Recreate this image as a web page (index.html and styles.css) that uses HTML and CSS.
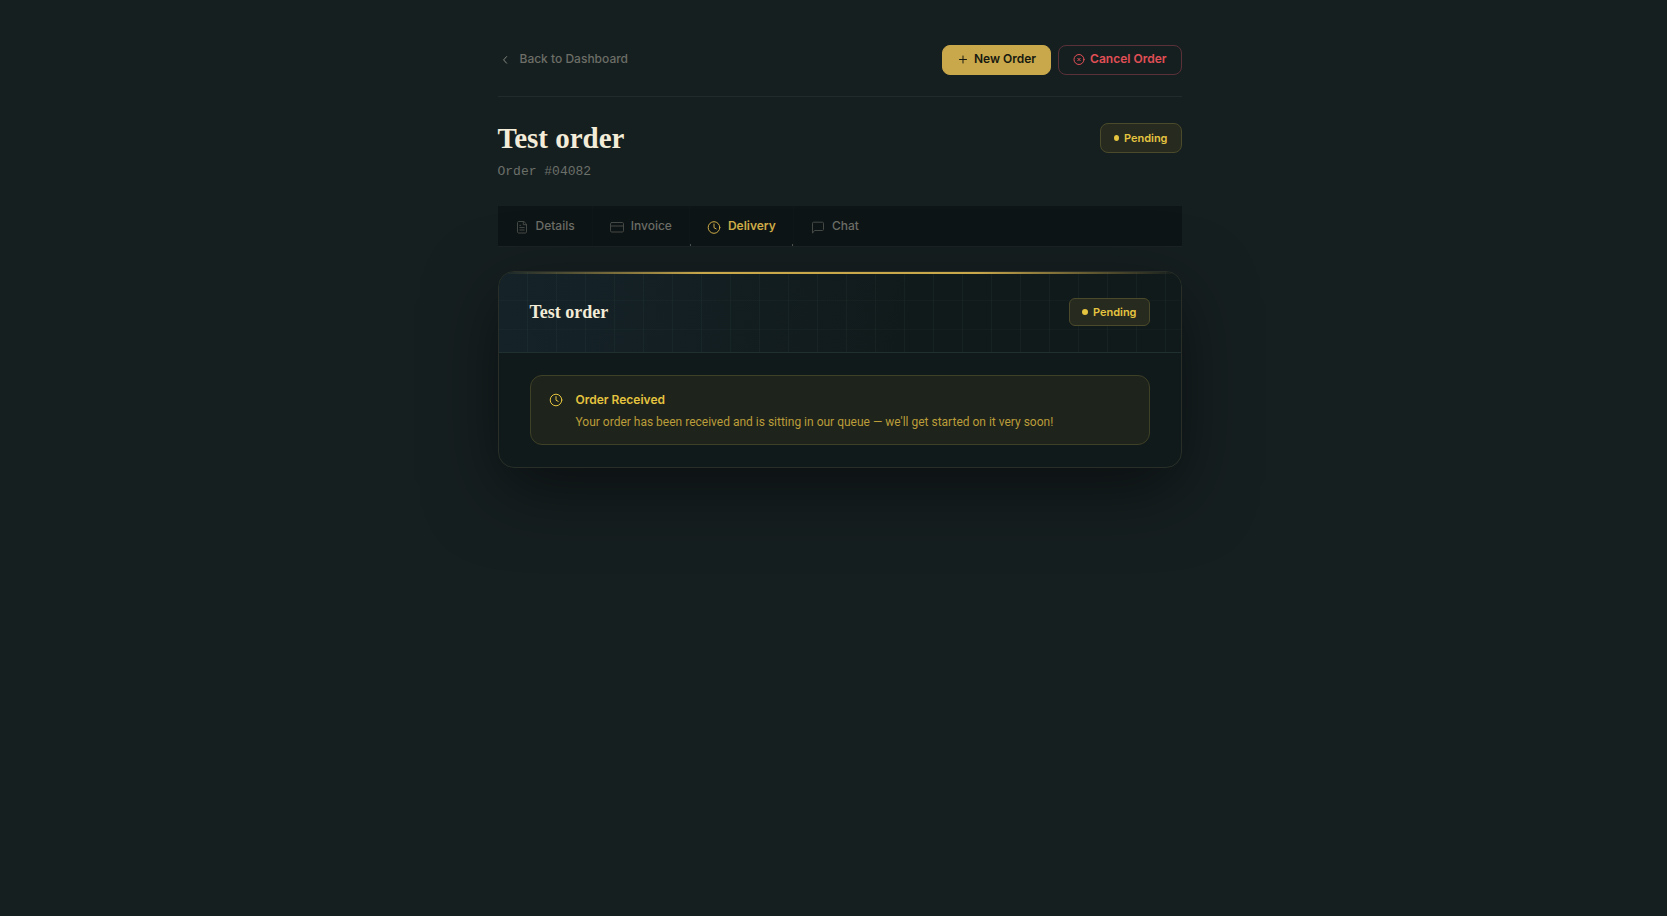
FILE: index.html
```html
<!DOCTYPE html>
<html lang="en">
<head>
  <meta charset="UTF-8" />
  <title>Test order | Delivery</title>
  <meta name="viewport" content="width=device-width, initial-scale=1.0" />
  <link rel="stylesheet" href="styles.css">
</head>
<body>

  <main class="page">

    <!-- Top bar -->
    <div class="topbar">
      <a class="back" href="#">
        <svg width="14" height="14" viewBox="0 0 14 14"><path d="M8.6 4.6 5.6 7.9l3 3.3" /></svg>
        Back to Dashboard
      </a>
      <div class="actions">
        <button class="btn btn-gold" type="button">
          <svg width="12" height="12" viewBox="0 0 12 12"><path d="M6 3v7M2.5 6.5h7" /></svg>
          New Order
        </button>
        <button class="btn btn-cancel" type="button">
          <svg width="12" height="12" viewBox="0 0 12 12"><circle cx="6" cy="6.5" r="5" /><path d="m4.8 5.3 2.4 2.4M7.2 5.3 4.8 7.7" /></svg>
          Cancel Order
        </button>
      </div>
    </div>

    <!-- Order title -->
    <header class="order-head">
      <div>
        <h1>Test order</h1>
        <p class="order-id">Order #04082</p>
      </div>
      <span class="badge">Pending</span>
    </header>

    <!-- Tabs -->
    <nav class="tabs">
      <a href="#">
        <svg width="14" height="14" viewBox="0 0 14 14"><path d="M8.5 1.5H3.6c-.6 0-1.1.5-1.1 1.1v9.3c0 .6.5 1.1 1.1 1.1h6.8c.6 0 1.1-.5 1.1-1.1V4.5zM8.3 1.7v3h3M4.8 7.6h4.4M4.8 10h4.4M4.8 5.3h1" /></svg>
        Details
      </a>
      <a href="#">
        <svg width="14" height="14" viewBox="0 0 14 14"><rect x=".5" y="2.5" width="13" height="9.5" rx="1.2" /><path d="M.5 6h13" /></svg>
        Invoice
      </a>
      <a class="active" href="#">
        <svg width="14" height="14" viewBox="0 0 14 14"><circle cx="7" cy="7.5" r="5.8" /><path d="M7 4v3.7l2.2 1.2" /></svg>
        Delivery
      </a>
      <a href="#">
        <svg width="14" height="14" viewBox="0 0 14 14"><path d="M1.5 12.8V3.2c0-.6.4-1 1-1h9c.6 0 1 .4 1 1v6.3c0 .6-.4 1-1 1H3.8z" /></svg>
        Chat
      </a>
    </nav>

    <!-- Delivery card -->
    <section class="card">
      <div class="card-head">
        <h2>Test order</h2>
        <span class="badge badge-small">Pending</span>
      </div>
      <div class="card-body">
        <div class="notice">
          <svg width="14" height="14" viewBox="0 0 14 14"><circle cx="7" cy="7" r="5.8" /><path d="M7 3.6v3.6l2.2 1.2" /></svg>
          <div>
            <h3>Order Received</h3>
            <p>Your order has been received and is sitting in our queue — we'll get started on it very soon!</p>
          </div>
        </div>
      </div>
    </section>

  </main>

</body>
</html>
```

FILE: styles.css
```css
* {
  margin: 0;
  padding: 0;
  box-sizing: border-box;
}

body {
  background: #161f20;
  min-height: 100vh;
  color: #f3ecd8;
  font-family: Inter, 'Liberation Sans', sans-serif;
  font-size: 12px;
  line-height: 16px;
}

svg {
  flex: none;
  fill: none;
  stroke: currentColor;
  stroke-linecap: round;
  stroke-linejoin: round;
}

a {
  text-decoration: none;
}

.page {
  max-width: 724px;
  margin: 0 auto;
  padding: 45px 14px 45px 26px;
}

.topbar {
  display: flex;
  justify-content: space-between;
  align-items: center;
  padding-bottom: 21px;
  border-bottom: 1px solid #222b2c;
}

.back {
  display: flex;
  align-items: center;
  gap: 8px;
  padding-bottom: 2px;
  color: #6c6e67;
  font-weight: 500;
}

.back svg {
  color: #858880;
}

.actions {
  display: flex;
  gap: 7px;
}

.btn {
  display: flex;
  align-items: center;
  gap: 5px;
  height: 30px;
  padding: 0 14px 2px;
  border: 1px solid transparent;
  border-radius: 8px;
  font: inherit;
  font-weight: 600;
  cursor: pointer;
}

.btn-gold {
  background: #c9a84c;
  border-color: #c9a84c;
  color: #16190f;
}

.btn-cancel {
  background: transparent;
  border-color: #5a3138;
  color: #e04f56;
}

.order-head {
  display: flex;
  justify-content: space-between;
  align-items: flex-start;
  margin: 26px 0;
}

h1,
h2 {
  font-family: 'Liberation Serif', serif;
  font-weight: bold;
}

h1 {
  font-size: 29px;
  line-height: 30px;
}

.order-id {
  margin-top: 11px;
  font-family: 'Liberation Mono', monospace;
  font-size: 13px;
  color: #6c706a;
}

.badge {
  display: flex;
  align-items: center;
  gap: 5px;
  height: 30px;
  padding: 0 13px;
  background: #262a1f;
  border: 1px solid #4b4a2a;
  border-radius: 8px;
  color: #e5c43f;
  font-size: 11px;
  font-weight: 600;
}

.badge::before {
  content: '';
  width: 5px;
  height: 6px;
  border-radius: 50%;
  background: #e5c43f;
}

.badge-small {
  height: 28px;
  padding: 0 12px;
  border-radius: 6px;
}

.badge-small::before {
  width: 6px;
}

.tabs {
  display: flex;
  background: #0e1516;
  border-bottom: 1px solid #1b2324;
}

.tabs a {
  position: relative;
  display: flex;
  align-items: center;
  gap: 7px;
  height: 40px;
  padding: 0 17px;
  border-right: 1px solid #0f1718;
  color: #6c6e67;
  font-weight: 500;
}

.tabs a:last-child {
  border-right-color: transparent;
}

.tabs svg {
  margin-top: 2px;
  opacity: 0.6;
}

.tabs .active {
  color: #d0ae48;
  font-weight: 600;
}

.tabs .active svg {
  opacity: 1;
}

/* corner marks under the active tab */
.tabs .active::before,
.tabs .active::after {
  content: '';
  position: absolute;
  bottom: 0;
  width: 1px;
  height: 2px;
  background: #50544f;
}

.tabs .active::before {
  left: 0;
}

.tabs .active::after {
  right: 0;
}

.card {
  position: relative;
  margin-top: 24px;
  background: #111a1b;
  border: 1px solid #292f28;
  border-radius: 16px;
  box-shadow: 0 22px 70px rgba(0, 0, 0, 0.5);
  overflow: hidden;
}

/* gold line along the top edge */
.card::before {
  content: '';
  position: absolute;
  top: 0;
  left: 0;
  right: 0;
  height: 2px;
  background: linear-gradient(90deg, transparent, #c9a84c 30%, #c9a84c 70%, transparent);
}

.card-head {
  display: flex;
  justify-content: space-between;
  align-items: center;
  padding: 26px 31px;
  border-bottom: 1px solid #203030;
  background:
    repeating-linear-gradient(90deg, transparent 0 28px, rgba(120, 170, 150, 0.05) 28px 29px),
    repeating-linear-gradient(180deg, transparent 0 28px, rgba(120, 170, 150, 0.03) 28px 29px),
    linear-gradient(100deg, #152329, #111a1b 60%);
}

h2 {
  font-size: 18px;
  line-height: 24px;
}

.card-body {
  padding: 22px 31px;
}

.notice {
  display: flex;
  gap: 13px;
  padding: 15px 18px 12px;
  background: #1e231c;
  border: 1px solid #3f4127;
  border-radius: 12px;
}

.notice svg {
  margin-top: 2px;
  color: #e5c43f;
}

.notice h3 {
  color: #e5c43f;
  font-size: 12px;
  font-weight: 600;
  line-height: 18px;
}

.notice p {
  margin-top: 3px;
  color: #bb9d39;
  font-family: Roboto, 'Liberation Sans', sans-serif;
  line-height: 20px;
}
```
